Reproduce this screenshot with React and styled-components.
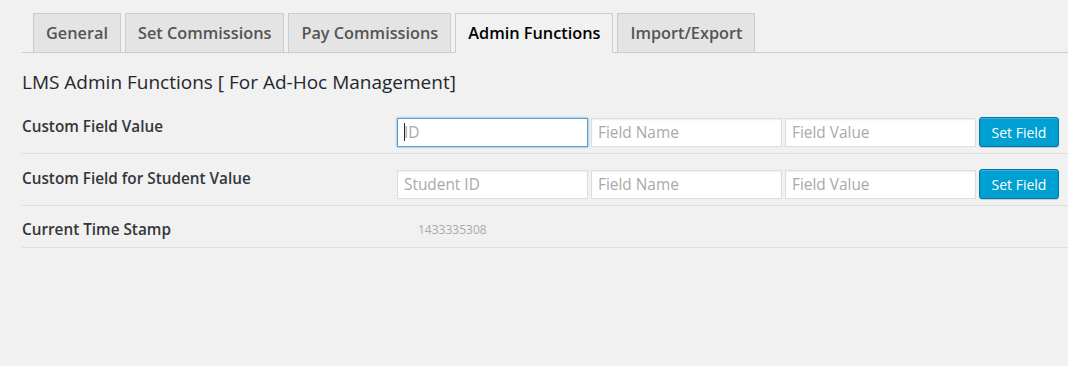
import React from 'react';
import styled, { createGlobalStyle } from 'styled-components';

const GlobalStyle = createGlobalStyle`
  body {
    margin: 0;
    background: #f1f1f1;
    font-family: 'Open Sans', 'Liberation Sans', sans-serif;
    color: #23282d;
  }
`;

const Page = styled.div`
  padding: 13px 0 0 22px;
  height: 353px;
`;

const TabBar = styled.div`
  display: flex;
  gap: 4px;
  padding-left: 11px;
  border-bottom: 1px solid #ccc;
  height: 39px;
`;

const Tab = styled.div`
  box-sizing: border-box;
  padding: 7px 12px 0;
  line-height: 24px;
  font-size: 16.3px;
  font-weight: 600;
  border: 1px solid #ccc;
  border-bottom: ${(p) => (p.active ? '1px solid #f1f1f1' : 'none')};
  background: ${(p) => (p.active ? '#f1f1f1' : '#e4e4e4')};
  color: ${(p) => (p.active ? '#000' : '#555')};
  height: ${(p) => (p.active ? '40px' : '39px')};
  white-space: nowrap;
`;

const Heading = styled.h3`
  margin: 18px 0 8px;
  font-size: 19px;
  line-height: 23px;
  font-weight: 400;
  color: #23282d;
`;

const Row = styled.div`
  display: flex;
  align-items: flex-start;
  height: ${(p) => (p.compact ? '41px' : '51px')};
  border-bottom: 1px solid #dedede;
`;

const Label = styled.div`
  width: 375px;
  padding-top: ${(p) => (p.compact ? '14px' : '15px')};
  font-size: 15.3px;
  line-height: 18px;
  font-weight: 600;
  color: #32373c;
`;

const Controls = styled.div`
  display: flex;
  align-items: center;
  gap: 3px;
  padding-top: 15px;
`;

const FieldWrap = styled.div`
  position: relative;
  display: flex;
`;

const Input = styled.input`
  width: 191px;
  height: 29px;
  box-sizing: border-box;
  margin: 0;
  padding: 0 6px;
  font-family: 'Open Sans', 'Liberation Sans', sans-serif;
  font-size: 15.4px;
  color: #32373c;
  background: #fff;
  border: 1px solid ${(p) => (p.focused ? '#5b9dd9' : '#ddd')};
  box-shadow: ${(p) =>
    p.focused ? '0 0 2px rgba(30, 140, 190, 0.8)' : 'inset 0 1px 2px rgba(0, 0, 0, 0.07)'};
  outline: none;

  &::placeholder {
    color: #a9a9a9;
  }
`;

const Caret = styled.span`
  position: absolute;
  left: 7px;
  top: 5px;
  width: 1px;
  height: 18px;
  background: #23282d;
`;

const Button = styled.button`
  width: 80px;
  height: 30px;
  box-sizing: border-box;
  margin: 0;
  padding: 0;
  font-family: 'Open Sans', 'Liberation Sans', sans-serif;
  font-size: 14px;
  color: #fff;
  background: #00a0d2;
  border: 1px solid #0073aa;
  border-radius: 3px;
  box-shadow: inset 0 1px 0 rgba(120, 200, 230, 0.5), 0 1px 0 rgba(0, 0, 0, 0.15);
`;

const Stamp = styled.div`
  padding: 16px 0 0 21px;
  font-size: 12px;
  line-height: 16px;
  color: #aaa;
`;

const tabs = ['General', 'Set Commissions', 'Pay Commissions', 'Admin Functions', 'Import/Export'];

const App = () => (
  <Page>
    <GlobalStyle />
    <TabBar>
      {tabs.map((t) => (
        <Tab key={t} active={t === 'Admin Functions'}>{t}</Tab>
      ))}
    </TabBar>
    <Heading>LMS Admin Functions [ For Ad-Hoc Management]</Heading>

    <Row>
      <Label>Custom Field Value</Label>
      <Controls>
        <FieldWrap>
          <Input focused placeholder="ID" />
          <Caret />
        </FieldWrap>
        <Input placeholder="Field Name" />
        <Input placeholder="Field Value" />
        <Button>Set Field</Button>
      </Controls>
    </Row>

    <Row>
      <Label>Custom Field for Student Value</Label>
      <Controls>
        <Input placeholder="Student ID" />
        <Input placeholder="Field Name" />
        <Input placeholder="Field Value" />
        <Button>Set Field</Button>
      </Controls>
    </Row>

    <Row compact>
      <Label compact>Current Time Stamp</Label>
      <Stamp>1433335308</Stamp>
    </Row>
  </Page>
);

export default App;
